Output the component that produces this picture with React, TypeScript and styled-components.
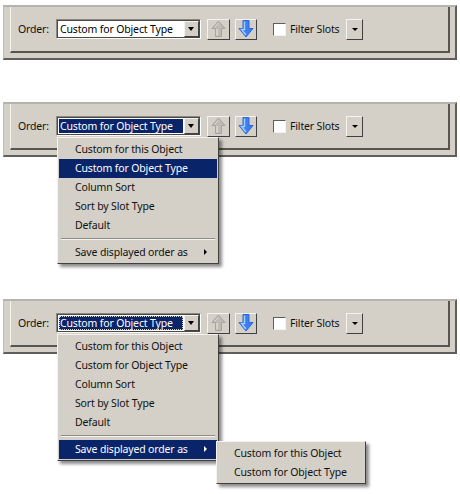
import styled, { createGlobalStyle } from "styled-components";

const GlobalStyle = createGlobalStyle`
  html, body {
    margin: 0;
    background: #fff;
  }
  body {
    font-family: "Noto Sans", "Liberation Sans", sans-serif;
    font-size: 10.5px;
    letter-spacing: -0.15px;
    color: #000;
  }
`;

const ORDERS = ["Custom for this Object", "Custom for Object Type", "Column Sort", "Sort by Slot Type", "Default"];
const SAVE_AS = ["Custom for this Object", "Custom for Object Type"];

function UpArrow() {
  return (
    <svg width="15" height="18" viewBox="0 0 15 18">
      <path d="M7.5 1 L14 8.5 L10.5 8.5 L10.5 16.5 L4.5 16.5 L4.5 8.5 L1 8.5 Z" fill="#bdbbb4" stroke="#a5a39c" />
      <path d="M6 9 L6 15.5" stroke="#dcdad4" strokeWidth="1.5" />
      <path d="M7.5 3 L3.5 7.5" stroke="#dcdad4" strokeWidth="1" />
    </svg>
  );
}

function DownArrow() {
  return (
    <svg width="16" height="18" viewBox="0 0 16 18">
      <path d="M5 0.5 L11 0.5 L11 8.5 L15 8.5 L8 17 L1 8.5 L5 8.5 Z" fill="#3a80f2" stroke="#2a66dc" />
      <path d="M6.5 1.5 L6.5 9.5 L3.5 9.5 L8 15" stroke="#a9cdfb" strokeWidth="1.4" fill="none" />
    </svg>
  );
}

function Toolbar({ state }: { state: "plain" | "selected" | "focused" }) {
  return (
    <Outer>
      <Inner>
        <Label>Order:</Label>
        <Combo>
          <ComboText $state={state}>Custom for Object Type</ComboText>
          <ComboButton>
            <Caret $half={3.5} $tall={4} />
          </ComboButton>
        </Combo>
        <IconButton $left={6} $width={23}>
          <UpArrow />
        </IconButton>
        <IconButton $left={5} $width={22}>
          <DownArrow />
        </IconButton>
        <Check />
        <Label>Filter Slots</Label>
        <SmallButton>
          <Caret $half={3} $tall={3} />
        </SmallButton>
      </Inner>
    </Outer>
  );
}

function Items({ active }: { active?: string }) {
  return (
    <>
      {ORDERS.map((name) => (
        <MenuItem key={name} $active={active === name}>
          {name}
        </MenuItem>
      ))}
      <Separator />
    </>
  );
}

export default function App() {
  return (
    <Page>
      <GlobalStyle />
      <Section $top={5} $height={60}>
        <Toolbar state="plain" />
      </Section>
      <Section $top={37} $height={172}>
        <Toolbar state="selected" />
        <Menu>
          <Items active="Custom for Object Type" />
          <MenuItem>
            Save displayed order as
            <SubArrow />
          </MenuItem>
        </Menu>
      </Section>
      <Section $top={25} $height={190}>
        <Toolbar state="focused" />
        <Menu>
          <Items />
          <MenuItem $active>
            Save displayed order as
            <SubArrow $light />
          </MenuItem>
        </Menu>
        <SubMenu>
          {SAVE_AS.map((name) => (
            <MenuItem key={name}>{name}</MenuItem>
          ))}
        </SubMenu>
      </Section>
    </Page>
  );
}

const Page = styled.div`
  width: 460px;
  height: 494px;
  overflow: hidden;
  display: flow-root;
`;

const Section = styled.section<{ $top: number; $height: number }>`
  position: relative;
  margin: ${(p) => p.$top}px 0 0 3px;
  height: ${(p) => p.$height}px;
  width: 454px;
`;

const Outer = styled.div`
  box-sizing: border-box;
  height: 55px;
  padding: 0 5px 5px 6px;
  background: #d4d0c8;
  border-top: 2px solid #b5b3ae;
  border-left: 1px solid #c0bdb6;
  border-bottom: 2px solid #5f5e5b;
  border-right: 2px solid #5f5e5b;
`;

const Inner = styled.div`
  box-sizing: border-box;
  height: 100%;
  display: flex;
  align-items: center;
  padding-left: 7px;
  border-left: 1px solid #f4f3ef;
  border-bottom: 2px solid #56554f;
  border-right: 2px solid #56554f;
`;

const Label = styled.span`
  white-space: nowrap;
  color: #101010;
`;

const Combo = styled.div`
  box-sizing: border-box;
  display: flex;
  align-items: center;
  width: 145px;
  height: 20px;
  margin-left: 7px;
  padding: 1px;
  background: #fff;
  border: 1px solid;
  border-color: #8a8883 #fbfbf9 #fbfbf9 #8a8883;
  box-shadow: inset 0 0 0 1px #4a4944;
`;

const ComboText = styled.div<{ $state: string }>`
  box-sizing: border-box;
  flex: 1;
  height: 14px;
  line-height: 14px;
  margin-left: 1px;
  padding-left: 1px;
  white-space: nowrap;
  background: ${(p) => (p.$state === "plain" ? "#fff" : "#0a246a")};
  color: ${(p) => (p.$state === "plain" ? "#000" : "#fff")};
  outline: ${(p) => (p.$state === "focused" ? "1px dotted #d4d0c8" : "none")};
  outline-offset: -1px;
`;

const ComboButton = styled.div`
  box-sizing: border-box;
  width: 15px;
  height: 16px;
  margin-left: 1px;
  display: flex;
  align-items: center;
  justify-content: center;
  background: #d4d0c8;
  border: 1px solid;
  border-color: #f4f3ef #404040 #404040 #f4f3ef;
`;

const Caret = styled.span<{ $half: number; $tall: number }>`
  width: 0;
  height: 0;
  border-left: ${(p) => p.$half}px solid transparent;
  border-right: ${(p) => p.$half}px solid transparent;
  border-top: ${(p) => p.$tall}px solid #000;
`;

const IconButton = styled.div<{ $left: number; $width: number }>`
  box-sizing: border-box;
  width: ${(p) => p.$width}px;
  height: 21px;
  margin-left: ${(p) => p.$left}px;
  display: flex;
  align-items: center;
  justify-content: center;
  background: #d4d0c8;
  border: 1px solid;
  border-color: #f4f3ef #404040 #404040 #f4f3ef;
`;

const Check = styled.span`
  box-sizing: border-box;
  width: 13px;
  height: 13px;
  margin: 0 4px 0 16px;
  background: #fff;
  border: 1px solid;
  border-color: #5f5e5b #f4f3ef #f4f3ef #5f5e5b;
`;

const SmallButton = styled.div`
  box-sizing: border-box;
  width: 17px;
  height: 21px;
  margin-left: 7px;
  display: flex;
  align-items: center;
  justify-content: center;
  background: #d4d0c8;
  border: 1px solid;
  border-color: #f4f3ef #404040 #404040 #f4f3ef;
`;

const Menu = styled.div`
  position: absolute;
  left: 54px;
  top: 35px;
  box-sizing: border-box;
  width: 162px;
  padding: 2px 1px 1px;
  background: #d4d0c8;
  border: 1px solid;
  border-color: #f4f3ef #404040 #404040 #f4f3ef;
  box-shadow: 3px 3px 3px rgba(0, 0, 0, 0.45);
`;

const SubMenu = styled(Menu)`
  left: 213px;
  top: 142px;
  width: 150px;
`;

const MenuItem = styled.div<{ $active?: boolean }>`
  position: relative;
  height: 19px;
  line-height: 18px;
  padding-left: 16px;
  white-space: nowrap;
  color: ${(p) => (p.$active ? "#fff" : "#101010")};
  background: ${(p) => (p.$active ? "#0a246a" : "transparent")};
`;

const Separator = styled.div`
  height: 0;
  margin: 3px 2px 3px;
  border-top: 1px solid #8f8d88;
  border-bottom: 1px solid #f4f3ef;
`;

const SubArrow = styled.span<{ $light?: boolean }>`
  position: absolute;
  right: 10px;
  top: 6px;
  width: 0;
  height: 0;
  border-top: 3px solid transparent;
  border-bottom: 3px solid transparent;
  border-left: 3px solid ${(p) => (p.$light ? "#fff" : "#000")};
`;
